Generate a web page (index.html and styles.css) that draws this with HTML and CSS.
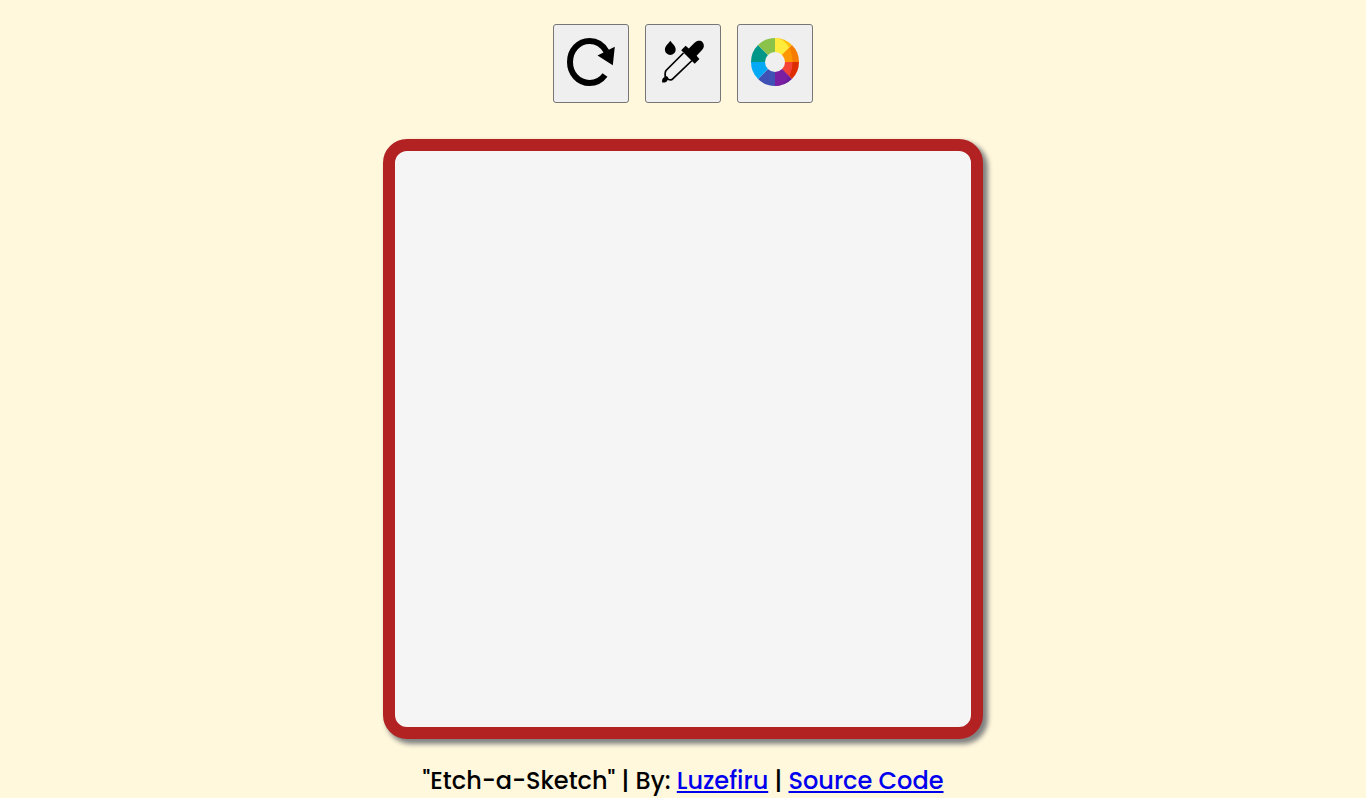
FILE: index.html
```html
<!DOCTYPE html>
<html lang="en">
<head>
<meta charset="utf-8">
<meta name="viewport" content="width=device-width, initial-scale=1">
<title>Etch-a-Sketch</title>
<link rel="stylesheet" href="styles.css">
</head>
<body>
<header class="toolbar">
  <button class="tool" type="button" aria-label="Reset">
    <svg class="icon" viewBox="0 0 48 48" aria-hidden="true">
      <path d="M38 37C34 42.500 28.500 45 22.500 45C11.500 45 3 35.700 3 24C3 12.300 11.500 3 22.500 3C29.500 3 35.500 6.500 39.500 13.500" fill="none" stroke="#000" stroke-width="6"/>
      <path d="M47.800 8.700L45.800 27.200L30.500 17.500Z"/>
    </svg>
  </button>
  <button class="tool" type="button" aria-label="Pick colour">
    <svg class="icon" viewBox="0 0 48 48" aria-hidden="true">
      <path d="M11.300 2.800C13 5.500 16.700 8 16.700 11.500A5.400 5.400 0 0 1 5.900 11.500C5.900 8 9.800 5.500 11.300 2.800Z"/>
      <path d="M24.500 15L7 32.500Q5.800 34 6.200 38.500Q8.700 39 8.900 41.200Q12.200 42.600 13.500 41.200L33 22.500" fill="none" stroke="#000" stroke-width="1.700"/>
      <path d="M3.200 44.400C2.600 41.500 4 39 6.400 39C8.800 39.300 9.300 41.500 8 43.200C7 44.500 5 44.600 3.200 44.400Z"/>
      <path d="M22.200 12.300L26.600 7.700L29.800 10.500L35.300 5C38.500 2 42 2.500 43.500 4.200C45.300 6.200 45.500 9.200 43 12L37.600 17.800L40.400 21L35.700 25.800Z"/>
    </svg>
  </button>
  <button class="tool" type="button" aria-label="Rainbow colours">
    <svg class="icon" viewBox="0 0 48 48" aria-hidden="true">
      <path fill="#ffc107" d="M24 24V0A24 24 0 0 1 40.970 7.030Z"/>
      <path fill="#f57c00" d="M24 24L40.970 7.030A24 24 0 0 1 48 24Z"/>
      <path fill="#dd2c00" d="M24 24H48A24 24 0 0 1 40.970 40.970Z"/>
      <path fill="#6a1b9a" d="M24 24L40.970 40.970A24 24 0 0 1 24 48Z"/>
      <path fill="#3f51b5" d="M24 24V48A24 24 0 0 1 7.030 40.970Z"/>
      <path fill="#03a9f4" d="M24 24L7.030 40.970A24 24 0 0 1 0 24Z"/>
      <path fill="#009688" d="M24 24H0A24 24 0 0 1 7.030 7.030Z"/>
      <path fill="#8bc34a" d="M24 24L7.030 7.030A24 24 0 0 1 24 0Z"/>
      <path fill="#ffeb3b" d="M24 24V0A17.500 24 0 0 1 38.130 9.870Z"/>
      <path fill="#ff9800" d="M24 24L38.130 9.870A17.500 24 0 0 1 41.500 24Z"/>
      <path fill="#f44336" d="M24 24H41.500A17.500 24 0 0 1 38.130 38.130Z"/>
      <path fill="#7b1fa2" d="M24 24L38.130 38.130A17.500 24 0 0 1 24 48Z"/>
      <circle cx="24" cy="24" r="10" fill="#efefef"/>
    </svg>
  </button>
</header>
<main class="board" aria-label="Drawing area"></main>
<footer class="credits">"Etch-a-Sketch" | By: <a href="#author">Luzefiru</a> | <a href="#source">Source Code</a></footer>
</body>
</html>
```
FILE: styles.css
```css
* {
  box-sizing: border-box;
}

body {
  margin: 0;
  padding-top: 24px;
  display: flex;
  flex-direction: column;
  align-items: center;
  background: cornsilk;
  font-family: Poppins, Inter, sans-serif;
}

.toolbar {
  display: flex;
  gap: 16px;
  margin-bottom: 36px;
}

.tool {
  padding: 13px 13px 16px;
  border: 1px solid #767676;
  border-radius: 3px;
  background: #efefef;
}

.icon {
  display: block;
  width: 48px;
  height: 48px;
}

.board {
  width: 600px;
  max-width: 100%;
  aspect-ratio: 1;
  border: 12px solid firebrick;
  border-radius: 24px;
  background: whitesmoke;
  box-shadow: 4px 4px 5px 1px gray;
}

.credits {
  margin-top: 24px;
  font-size: 24px;
  font-weight: 500;
  line-height: 35px;
  font-kerning: none;
}

.credits a {
  color: #0000ee;
}
```
